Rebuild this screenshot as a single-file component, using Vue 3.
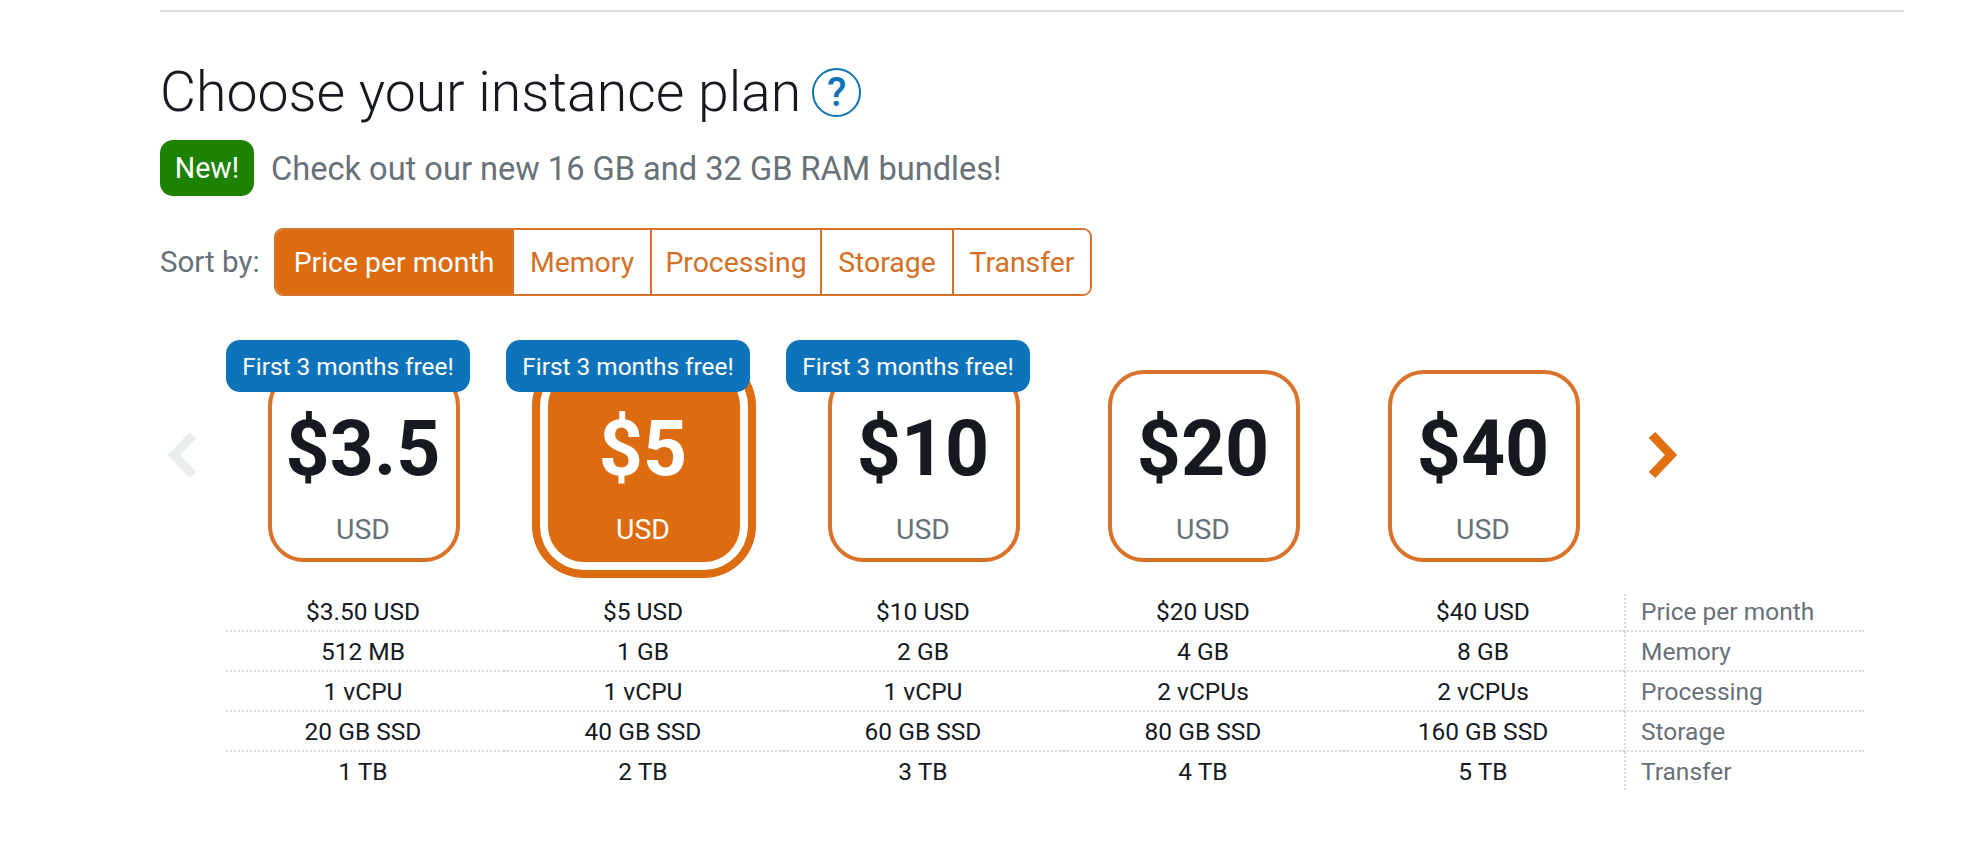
<script setup>
const sorts = ['Price per month', 'Memory', 'Processing', 'Storage', 'Transfer']
const plans = [
  { price: '$3.5', promo: true, rows: ['$3.50 USD', '512 MB', '1 vCPU', '20 GB SSD', '1 TB'] },
  { price: '$5', promo: true, selected: true, rows: ['$5 USD', '1 GB', '1 vCPU', '40 GB SSD', '2 TB'] },
  { price: '$10', promo: true, rows: ['$10 USD', '2 GB', '1 vCPU', '60 GB SSD', '3 TB'] },
  { price: '$20', rows: ['$20 USD', '4 GB', '2 vCPUs', '80 GB SSD', '4 TB'] },
  { price: '$40', rows: ['$40 USD', '8 GB', '2 vCPUs', '160 GB SSD', '5 TB'] },
]
</script>

<template>
  <main class="page">
    <h1 class="title">Choose your instance plan <span class="help">?</span></h1>
    <div class="notice">
      <span class="new">New!</span>
      <span class="notice-text">Check out our new 16 GB and 32 GB RAM bundles!</span>
    </div>
    <div class="sort">
      <span class="sort-label">Sort by:</span>
      <div class="segments">
        <button v-for="(s, i) in sorts" :key="s" class="seg" :class="{ active: i === 0 }">{{ s }}</button>
      </div>
    </div>
    <div class="carousel">
      <svg class="arrow" width="30" height="46" viewBox="0 0 30 46">
        <path d="M26 3 L7 23 L26 43" fill="none" stroke="#eaeded" stroke-width="9" />
      </svg>
      <div class="track">
        <div v-for="p in plans" :key="p.price" class="plan">
          <span v-if="p.promo" class="promo">First 3 months free!</span>
          <div class="card" :class="{ selected: p.selected }">
            <div class="price">{{ p.price }}</div>
            <div class="cur">USD</div>
          </div>
        </div>
      </div>
      <svg class="arrow next" width="30" height="46" viewBox="0 0 30 46">
        <path d="M4 3 L23 23 L4 43" fill="none" stroke="#e07010" stroke-width="9" />
      </svg>
    </div>
    <div class="specs">
      <div v-for="(label, r) in ['Price per month', 'Memory', 'Processing', 'Storage', 'Transfer']" :key="label" class="row" :class="{ last: r === 4 }">
        <div v-for="p in plans" :key="p.price" class="cell">{{ p.rows[r] }}</div>
        <div class="cell label">{{ label }}</div>
      </div>
    </div>
  </main>
</template>

<style>
body { background: #fff; }
</style>

<style scoped>
.page {
  box-sizing: border-box;
  width: 1744px;
  margin: 10px 0 0 160px;
  border-top: 2px solid #dcdfe0;
  font-family: Roboto, "Noto Sans", sans-serif;
  color: #16191f;
}
.title {
  margin: 48px 0 0;
  display: flex;
  align-items: center;
  gap: 11px;
  height: 66px;
  font-size: 55.4px;
  line-height: 66px;
  font-weight: 300;
}
.help {
  box-sizing: border-box;
  width: 49px;
  height: 49px;
  margin-top: -2px;
  border: 2px solid #0f73bb;
  border-radius: 50%;
  color: #0f73bb;
  font-size: 40px;
  line-height: 45px;
  font-weight: 500;
  text-align: center;
}
.notice {
  margin-top: 14px;
  display: flex;
  align-items: center;
  gap: 17px;
  height: 56px;
}
.new {
  width: 94px;
  height: 56px;
  border-radius: 13px;
  background: #1d8102;
  color: #fff;
  font-size: 28.6px;
  line-height: 56px;
  text-align: center;
}
.notice-text {
  padding-top: 2px;
  font-size: 32.6px;
  color: #687078;
}
.sort {
  margin-top: 32px;
  display: flex;
  align-items: center;
  gap: 15px;
  height: 68px;
}
.sort-label {
  width: 99px;
  font-size: 29.5px;
  white-space: nowrap;
  color: #687078;
}
.segments {
  box-sizing: border-box;
  display: grid;
  grid-template-columns: 236px 138px 170px 132px 138px;
  width: 818px;
  height: 68px;
  border: 2px solid #d4732b;
  border-radius: 9px;
  overflow: hidden;
}
.seg {
  border: 0;
  border-left: 2px solid #d4732b;
  padding: 0;
  background: #fff;
  color: #d66f26;
  font: inherit;
  font-size: 28.4px;
}
.seg:first-child { border-left: 0; }
.seg.active {
  background: #dd6b10;
  color: #fff;
}
.carousel {
  margin-top: 44px;
  display: flex;
  align-items: flex-start;
}
.arrow {
  margin: 92px 0 0 7px;
  flex: none;
}
.arrow.next { margin-left: 24px; }
.track {
  margin-left: 27px;
  display: grid;
  grid-template-columns: repeat(5, 280px);
}
.plan {
  position: relative;
  padding-top: 30px;
  display: flex;
  justify-content: center;
}
.promo {
  position: absolute;
  z-index: 1;
  top: 0;
  left: 2px;
  width: 244px;
  height: 52px;
  border-radius: 14px;
  background: #0f73bb;
  color: #fff;
  font-size: 24.4px;
  line-height: 53px;
  text-align: center;
}
.card {
  box-sizing: border-box;
  width: 192px;
  height: 192px;
  border: 4px solid #d9722a;
  border-radius: 36px;
  text-align: center;
  background: #fff;
}
.card.selected {
  border-color: #dd6b10;
  background: #dd6b10;
  box-shadow: 0 0 0 8px #fff, 0 0 0 16px #dd6b10;
  color: #fff;
}
.price {
  margin: 29px -4px 0 -6px;
  font-size: 77px;
  line-height: 92px;
  font-weight: 700;
}
.cur {
  margin: 18px 2px 0 0;
  font-size: 28.4px;
  line-height: 34px;
  color: #687078;
}
.card.selected .cur { color: #fff; }
.specs {
  margin: 30px 0 0 64px;
}
.row {
  display: grid;
  grid-template-columns: repeat(5, 280px) 240px;
  grid-template-rows: 40px;
  height: 40px;
}
.cell {
  box-sizing: border-box;
  border-bottom: 2px dotted #d5dbdb;
  padding-right: 2px;
  text-align: center;
  font-size: 24.5px;
  line-height: 39px;
}
.cell:first-child { margin-left: 2px; padding-right: 4px; }
.row.last .cell { border-bottom: 0; }
.label {
  border-left: 2px dotted #d5dbdb;
  padding: 0 0 0 15px;
  text-align: left;
  color: #687078;
}
.row:first-child .label {
  margin-top: 2px;
  line-height: 35px;
}
.row.last .label { margin-bottom: 2px; }
</style>
